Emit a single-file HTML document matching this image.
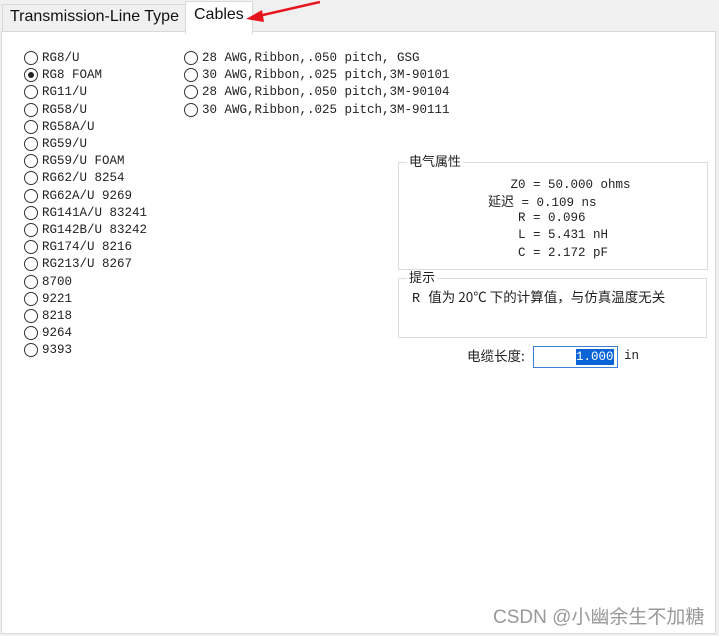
<!DOCTYPE html>
<html><head><meta charset="utf-8"><style>
body{margin:0;width:719px;height:636px;background:#f0f0f0;position:relative;overflow:hidden;font-family:"Liberation Mono","Noto Sans CJK SC",monospace;font-size:12.5px;color:#222}
.abs{position:absolute}
.panel{position:absolute;left:1px;top:31px;width:713px;height:601px;background:#fff;border:1px solid #d9d9d9}
.tab{position:absolute;font-family:"Liberation Sans","Noto Sans CJK SC",sans-serif;font-size:16px;color:#111}
.r{position:absolute;height:17px;line-height:17px;white-space:nowrap}
.r i{position:absolute;left:0;top:1px;width:14px;height:14px;border:1px solid #333;border-radius:50%;background:#fff;box-sizing:border-box}
.r i.on::after{content:"";position:absolute;left:3px;top:3px;width:6px;height:6px;border-radius:50%;background:#222}
.r span{position:absolute;left:18px}
.g{position:absolute;border:1px solid #dcdcdc}
.gl{position:absolute;background:#fff;padding:0 2px;font-family:"Noto Sans CJK SC",sans-serif;font-size:13px;line-height:14px}
.v{position:absolute;white-space:pre;line-height:17px}
</style></head><body>
<div class="abs" style="left:2px;top:4px;width:183px;height:28px;background:#f0f0f0;border:1px solid #d9d9d9;border-bottom:none"></div>
<div class="tab" style="left:10px;top:8px">Transmission-Line Type</div>
<div class="panel"></div>
<div class="abs" style="left:185px;top:1px;width:66px;height:32px;background:#fff;border:1px solid #d9d9d9;border-bottom:none"></div>
<div class="tab" style="left:194px;top:6px">Cables</div>
<svg class="abs" style="left:240px;top:0" width="80" height="30"><line x1="80" y1="2" x2="14" y2="17" stroke="#e8141b" stroke-width="2.5"/><polygon points="6,19 22,10 24,22" fill="#e8141b"/></svg>

<div id="c1"></div>
<script>
var a=["RG8/U","RG8 FOAM","RG11/U","RG58/U","RG58A/U","RG59/U","RG59/U FOAM","RG62/U 8254","RG62A/U 9269","RG141A/U 83241","RG142B/U 83242","RG174/U 8216","RG213/U 8267","8700","9221","8218","9264","9393"];
var b=["28 AWG,Ribbon,.050 pitch, GSG","30 AWG,Ribbon,.025 pitch,3M-90101","28 AWG,Ribbon,.050 pitch,3M-90104","30 AWG,Ribbon,.025 pitch,3M-90111"];
var h="";
a.forEach(function(t,i){h+='<div class="r" style="left:24px;top:'+(50+i*17.2)+'px"><i'+(i==1?' class="on"':'')+'></i><span>'+t+'</span></div>';});
b.forEach(function(t,i){h+='<div class="r" style="left:184px;top:'+(50+i*17.2)+'px"><i></i><span>'+t+'</span></div>';});
document.getElementById("c1").innerHTML=h;
</script>

<div class="g" style="left:398px;top:162px;width:308px;height:106px"></div>
<div class="gl" style="left:407px;top:154px">电气属性</div>
<div class="v" style="left:488px;top:177px">   Z0 = 50.000 ohms</div>
<div class="v" style="left:488px;top:192px"><span style="font-family:'Noto Sans CJK SC';font-size:13px">延迟</span> = 0.109 ns</div>
<div class="v" style="left:488px;top:210px">    R = 0.096</div>
<div class="v" style="left:488px;top:227px">    L = 5.431 nH</div>
<div class="v" style="left:488px;top:245px">    C = 2.172 pF</div>

<div class="g" style="left:398px;top:278px;width:307px;height:58px"></div>
<div class="gl" style="left:407px;top:270px">提示</div>
<div class="v" style="left:412px;top:288px;font-family:'Liberation Mono','Noto Sans CJK SC',monospace;font-size:13.5px">R <span style="font-family:'Noto Sans CJK SC'">值为 20℃ 下的计算值，与仿真温度无关</span></div>

<div class="v" style="left:467px;top:347px;font-family:'Noto Sans CJK SC';font-size:13.5px">电缆长度:</div>
<div class="abs" style="left:533px;top:346px;width:83px;height:20px;border:1px solid #3c7fd6;background:#fff"></div>
<div class="abs" style="left:576px;top:349px;width:38px;height:16px;background:#0a64d6;color:#fff;line-height:16px">1.000</div>
<div class="v" style="left:624px;top:348px">in</div>

<div class="abs" style="left:493px;top:602px;font-family:'Liberation Sans','Noto Sans CJK SC',sans-serif;font-size:19px;color:#999">CSDN @小幽余生不加糖</div>
</body></html>
